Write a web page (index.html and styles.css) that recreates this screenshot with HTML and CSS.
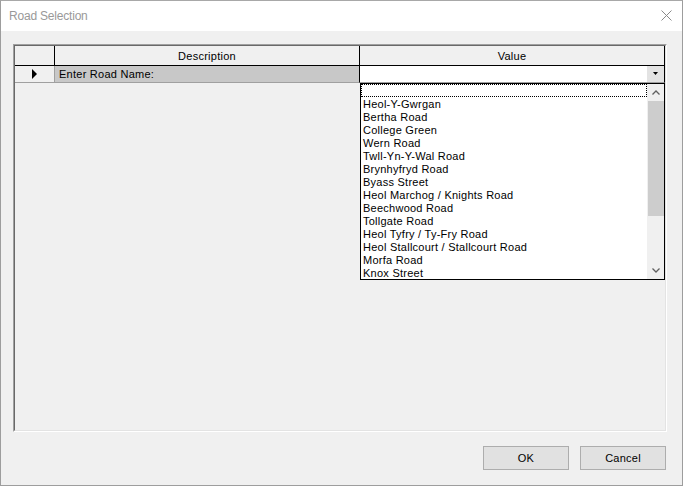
FILE: index.html
```html
<!DOCTYPE html>
<html>
<head>
<meta charset="utf-8">
<title>Road Selection</title>
<link rel="stylesheet" href="styles.css">
</head>
<body>
<div class="window">
  <div class="titlebar">
    <span class="title">Road Selection</span>
    <svg class="close" width="11" height="11" viewBox="0 0 11 11"><path d="M0.5 0.5 L10.5 10.5 M10.5 0.5 L0.5 10.5" stroke="#8a8a8a" stroke-width="1" fill="none"/></svg>
  </div>
  <div class="content">
    <div class="grid">
      <div class="grid-inner">
        <div class="table">
          <div class="hcell rowhead"></div>
          <div class="hcell">Description</div>
          <div class="hcell last">Value</div>
          <div class="dcell rowhead"><svg width="6" height="10" viewBox="0 0 6 10"><path d="M0 0 L5 5 L0 10 Z" fill="#000"/></svg></div>
          <div class="dcell desc">Enter Road Name:</div>
          <div class="dcell value last">
            <span class="combo-text"></span>
            <span class="combo-btn"><svg width="5" height="3" viewBox="0 0 5 3"><path d="M0 0 H5 L2.5 3 Z" fill="#000"/></svg></span>
          </div>
        </div>
        <div class="dropdown">
          <div class="items">
            <div class="item focus"></div>
            <div class="item">Heol-Y-Gwrgan</div>
            <div class="item">Bertha Road</div>
            <div class="item">College Green</div>
            <div class="item">Wern Road</div>
            <div class="item">Twll-Yn-Y-Wal Road</div>
            <div class="item">Brynhyfryd Road</div>
            <div class="item">Byass Street</div>
            <div class="item">Heol Marchog / Knights Road</div>
            <div class="item">Beechwood Road</div>
            <div class="item">Tollgate Road</div>
            <div class="item">Heol Tyfry / Ty-Fry Road</div>
            <div class="item">Heol Stallcourt / Stallcourt Road</div>
            <div class="item">Morfa Road</div>
            <div class="item">Knox Street</div>
          </div>
          <div class="scrollbar">
            <div class="sb-btn"><svg width="8" height="5" viewBox="0 0 8 5"><path d="M0.5 4.5 L4 1 L7.5 4.5" stroke="#606060" stroke-width="1.3" fill="none"/></svg></div>
            <div class="sb-track"><div class="sb-thumb"></div></div>
            <div class="sb-btn"><svg width="8" height="5" viewBox="0 0 8 5"><path d="M0.5 0.5 L4 4 L7.5 0.5" stroke="#606060" stroke-width="1.3" fill="none"/></svg></div>
          </div>
        </div>
      </div>
    </div>
    <div class="buttons">
      <button class="btn">OK</button>
      <button class="btn">Cancel</button>
    </div>
  </div>
</div>
</body>
</html>
```
FILE: styles.css
```css
html, body {
  margin: 0;
  padding: 0;
  background: #fff;
}
body {
  font-family: "Liberation Sans", Arial, sans-serif;
  font-size: 11px;
  color: #000;
}
.window {
  width: 683px;
  height: 486px;
  box-sizing: border-box;
  border: 1px solid #9d9d9d;
  border-top-color: #a8a8a8;
  display: flex;
  flex-direction: column;
  background: #f0f0f0;
}
.titlebar {
  height: 30px;
  flex: none;
  background: #fff;
  display: flex;
  align-items: center;
  justify-content: space-between;
  padding: 0 10px 0 8px;
}
.title {
  font-size: 12px;
  color: #999;
  letter-spacing: -0.2px;
  margin-top: -1px;
}
.close {
  display: block;
  margin-top: -2px;
}
.content {
  flex: 1;
  display: flex;
  flex-direction: column;
  padding: 13px 15px 15px 12px;
}
.grid {
  height: 388px;
  box-sizing: border-box;
  border: 1px solid;
  border-color: #a0a0a0 #fff #fff #a0a0a0;
  flex: none;
  letter-spacing: 0.25px;
}
.grid-inner {
  position: relative;
  height: 100%;
  box-sizing: border-box;
  border: 1px solid;
  border-color: #696969 #e3e3e3 #e3e3e3 #696969;
  background: #f0f0f0;
}
.table {
  display: grid;
  grid-template-columns: 40px 305px 305px;
  grid-template-rows: 20px 17px;
}
.hcell {
  box-sizing: border-box;
  border-right: 1px solid #000;
  border-bottom: 1px solid #000;
  background: #f0f0f0;
  display: flex;
  align-items: center;
  justify-content: center;
  padding-top: 1px;
}
.dcell {
  box-sizing: border-box;
  border-right: 1px solid #a0a0a0;
  border-bottom: 1px solid #a0a0a0;
  display: flex;
  align-items: center;
}
.rowhead.dcell {
  justify-content: center;
  background: #f0f0f0;
}
.rowhead svg {
  display: block;
  margin-left: 1px;
}
.desc {
  background: #c8c8c8;
  padding-left: 4px;
  border-right-color: #000;
}
.last {
  border-right-color: #000;
}
.value {
  background: #fff;
  justify-content: space-between;
}
.combo-btn {
  width: 17px;
  height: 16px;
  background: #e3e3e3;
  display: flex;
  align-items: center;
  justify-content: center;
}
.combo-btn svg {
  display: block;
  margin-top: -1px;
}
.dropdown {
  position: absolute;
  left: 345px;
  top: 37px;
  width: 305px;
  height: 197px;
  box-sizing: border-box;
  border: 1px solid #000;
  background: #fff;
  display: flex;
}
.items {
  flex: 1;
  display: flex;
  flex-direction: column;
}
.item {
  height: 13px;
  line-height: 13px;
  padding-top: 1px;
  padding-left: 2px;
  white-space: nowrap;
  box-sizing: border-box;
  overflow: visible;
}
.item.focus {
  border: 1px dotted #000;
  padding-top: 0;
}
.scrollbar {
  width: 17px;
  display: flex;
  flex-direction: column;
  background: #f0f0f0;
}
.sb-btn {
  height: 17px;
  display: flex;
  align-items: center;
  justify-content: center;
}
.sb-btn svg {
  display: block;
}
.sb-track {
  flex: 1;
}
.sb-thumb {
  height: 115px;
  margin-left: 1px;
  background: #cdcdcd;
}
.buttons {
  margin-top: 14px;
  display: flex;
  justify-content: flex-end;
  gap: 11px;
  padding-right: 1px;
}
.btn {
  width: 86px;
  height: 24px;
  box-sizing: border-box;
  border: 1px solid #adadad;
  background: #e1e1e1;
  font-family: "Liberation Sans", Arial, sans-serif;
  font-size: 11px;
  letter-spacing: 0.25px;
  color: #000;
  padding: 0;
  margin: 0;
}
```
